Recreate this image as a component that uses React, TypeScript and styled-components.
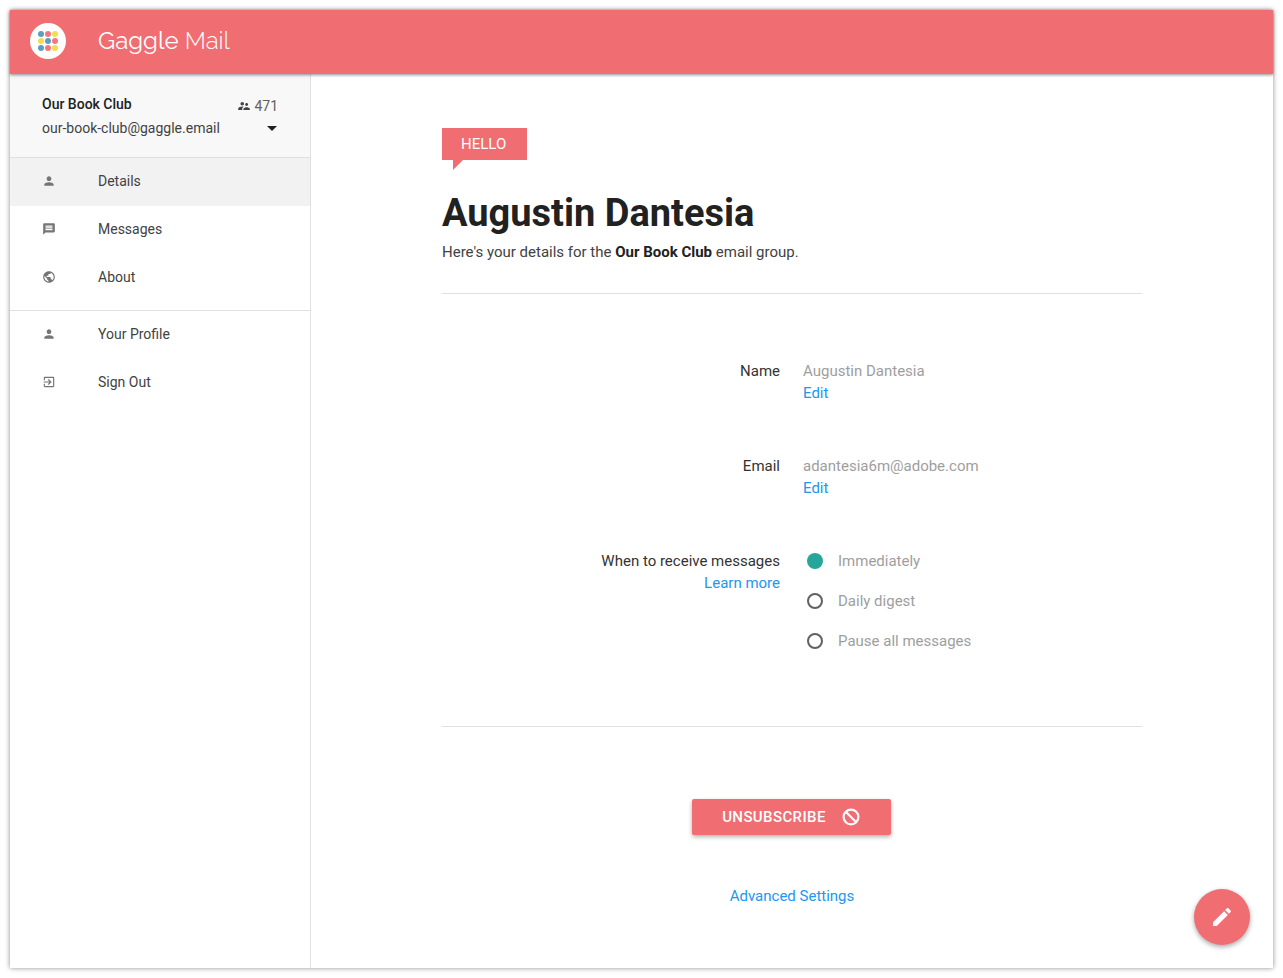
import * as React from 'react'
import styled, { createGlobalStyle } from 'styled-components'

const coral = '#f06d72'

const GlobalStyle = createGlobalStyle`
  html, body {
    margin: 0;
    background: #fff;
  }
  body {
    padding: 10px;
    font-family: Roboto, 'Liberation Sans', sans-serif;
    font-size: 14px;
    color: #212121;
  }
  * {
    box-sizing: border-box;
  }
`

const Frame = styled.div`
  position: relative;
  display: flex;
  flex-direction: column;
  width: 1263px;
  height: 958px;
  background: #fff;
  box-shadow: 0 0 5px rgba(0, 0, 0, 0.45);
`

const Header = styled.header`
  position: relative;
  z-index: 2;
  flex: none;
  display: flex;
  align-items: center;
  height: 64px;
  padding-left: 20px;
  background: ${coral};
  box-shadow: 0 1px 3px rgba(0, 0, 0, 0.45);
`

const LogoBadge = styled.svg`
  width: 36px;
  height: 36px;
  margin-top: -2px;
`

const Brand = styled.div`
  margin: -4px 0 0 32px;
  font-family: Raleway, Lato, 'Open Sans', sans-serif;
  font-size: 24px;
  font-weight: 400;
  color: #fff;
`

const BrandLight = styled.span`
  font-weight: 300;
`

const Body = styled.div`
  flex: 1;
  display: flex;
  min-height: 0;
`

const Sidebar = styled.aside`
  flex: none;
  width: 301px;
  border-right: 1px solid #e0e0e0;
`

const GroupCard = styled.div`
  height: 84px;
  padding: 18px 32px 0;
  background: #f8f8f8;
  border-bottom: 1px solid #e0e0e0;
`

const GroupRow = styled.div`
  display: flex;
  justify-content: space-between;
  align-items: center;
  height: 24px;
`

const GroupName = styled.span`
  font-weight: 500;
  color: #212121;
`

const GroupEmail = styled.span`
  color: #424242;
`

const MemberCount = styled.span`
  display: flex;
  align-items: center;
  gap: 3px;
  margin-top: 3px;
  color: #616161;
`

const Caret = styled.span`
  width: 0;
  height: 0;
  margin: 1px 1px 0 0;
  border-left: 5px solid transparent;
  border-right: 5px solid transparent;
  border-top: 5px solid #212121;
`

const NavList = styled.nav<{ $divided?: boolean }>`
  padding-bottom: ${({ $divided }) => ($divided ? '8px' : '0')};
  border-bottom: ${({ $divided }) => ($divided ? '1px solid #e0e0e0' : 'none')};
`

const NavItem = styled.a<{ $active?: boolean }>`
  display: flex;
  align-items: center;
  height: 48px;
  padding: 0 0 2px 32px;
  color: #424242;
  background: ${({ $active }) => ($active ? '#f2f2f2' : 'transparent')};
`

const NavIcon = styled.svg`
  flex: none;
  width: 14px;
  height: 14px;
  margin-right: 42px;
  fill: #757575;
`

const Main = styled.main`
  flex: 1;
  display: flex;
  justify-content: center;
  min-width: 0;
`

const Content = styled.div`
  width: 700px;
  padding-top: 54px;
  font-size: 15px;
`

const Hello = styled.div`
  position: relative;
  width: 85px;
  height: 32px;
  padding-left: 19px;
  line-height: 32px;
  color: #fff;
  background: ${coral};

  &::after {
    content: '';
    position: absolute;
    left: 11px;
    top: 32px;
    border-top: 10px solid ${coral};
    border-right: 10px solid transparent;
  }
`

const Title = styled.h1`
  margin: 29px 0 0;
  font-size: 38px;
  line-height: 48px;
  font-weight: 700;
  color: #212121;
`

const Intro = styled.p`
  margin: 4px 0 0;
  padding-bottom: 30px;
  line-height: 22px;
  color: #424242;
  border-bottom: 1px solid #e0e0e0;
`

const Strong = styled.strong`
  font-weight: 700;
  color: #212121;
`

const Fields = styled.div`
  display: flex;
  flex-direction: column;
  gap: 51px;
  padding: 66px 0 74px;
  border-bottom: 1px solid #e0e0e0;
`

const Field = styled.div`
  display: grid;
  grid-template-columns: 338px 1fr;
  column-gap: 23px;
  line-height: 22px;
`

const Label = styled.div`
  text-align: right;
  color: #333;
`

const Value = styled.div`
  color: #9e9e9e;
`

const Link = styled.a`
  display: block;
  color: #2196f3;
`

const Radios = styled.div`
  display: flex;
  flex-direction: column;
  gap: 18px;
`

const RadioRow = styled.div`
  display: flex;
  align-items: center;
  gap: 15px;
  height: 22px;
  padding-left: 4px;
  color: #9e9e9e;
`

const RadioMark = styled.span<{ $checked?: boolean }>`
  width: 16px;
  height: 16px;
  border-radius: 50%;
  background: ${({ $checked }) => ($checked ? '#26a69a' : 'transparent')};
  border: ${({ $checked }) => ($checked ? 'none' : '2px solid #616161')};
`

const Actions = styled.div`
  display: flex;
  flex-direction: column;
  align-items: center;
  padding-top: 72px;
`

const Unsubscribe = styled.button`
  display: flex;
  align-items: center;
  justify-content: center;
  gap: 15px;
  width: 199px;
  height: 36px;
  margin-right: 1px;
  padding: 0;
  border: none;
  border-radius: 2px;
  font-family: inherit;
  font-size: 15px;
  font-weight: 500;
  letter-spacing: 0.4px;
  color: #fff;
  background: ${coral};
  box-shadow: 0 2px 4px rgba(0, 0, 0, 0.3);
`

const BanIcon = styled.svg`
  width: 20px;
  height: 20px;
  fill: none;
  stroke: #fff;
  stroke-width: 2.2;
`

const AdvancedLink = styled(Link)`
  margin-top: 50px;
  line-height: 22px;
`

const Fab = styled.button`
  position: absolute;
  right: 23px;
  bottom: 23px;
  display: flex;
  align-items: center;
  justify-content: center;
  width: 56px;
  height: 56px;
  padding: 0;
  border: none;
  border-radius: 50%;
  background: ${coral};
  box-shadow: 0 2px 5px rgba(0, 0, 0, 0.35);
`

const FabIcon = styled.svg`
  width: 24px;
  height: 24px;
  fill: #fff;
`

const paths = {
  person:
    'M12 12c2.21 0 4-1.79 4-4s-1.79-4-4-4-4 1.79-4 4 1.79 4 4 4zm0 2c-2.67 0-8 1.34-8 4v2h16v-2c0-2.66-5.33-4-8-4z',
  message:
    'M20 2H4c-1.1 0-1.99.9-1.99 2L2 22l4-4h14c1.1 0 2-.9 2-2V4c0-1.1-.9-2-2-2zm-2 12H6v-2h12v2zm0-3H6V9h12v2zm0-3H6V6h12v2z',
  globe:
    'M12 2C6.48 2 2 6.48 2 12s4.48 10 10 10 10-4.48 10-10S17.52 2 12 2zm-1 17.93c-3.95-.49-7-3.85-7-7.93 0-.62.08-1.21.21-1.79L9 15v1c0 1.1.9 2 2 2v1.93zm6.9-2.54c-.26-.81-1-1.39-1.9-1.39h-1v-3c0-.55-.45-1-1-1H8v-2h2c.55 0 1-.45 1-1V7h2c1.1 0 2-.9 2-2v-.41c2.93 1.19 5 4.06 5 7.41 0 2.08-.8 3.97-2.1 5.39z',
  exit:
    'M10.09 15.59L11.5 17l5-5-5-5-1.41 1.41L12.67 11H3v2h9.67l-2.58 2.59zM19 3H5c-1.11 0-2 .9-2 2v4h2V5h14v14H5v-4H3v4c0 1.1.89 2 2 2h14c1.1 0 2-.9 2-2V5c0-1.1-.9-2-2-2z',
  group:
    'M16.5 12c1.38 0 2.49-1.12 2.49-2.5S17.88 7 16.5 7C15.12 7 14 8.12 14 9.5s1.12 2.5 2.5 2.5zM9 11c1.66 0 2.99-1.34 2.99-3S10.66 5 9 5C7.34 5 6 6.34 6 8s1.34 3 3 3zm7.5 3c-1.83 0-5.5.92-5.5 2.75V19h11v-2.25c0-1.83-3.67-2.75-5.5-2.75zM9 13c-2.33 0-7 1.17-7 3.5V19h7v-2.25c0-.85.33-2.34 2.37-3.47C10.5 13.1 9.66 13 9 13z',
  edit:
    'M3 17.25V21h3.75L17.81 9.94l-3.75-3.75L3 17.25zM20.71 7.04c.39-.39.39-1.02 0-1.41l-2.34-2.34c-.39-.39-1.02-.39-1.41 0l-1.83 1.83 3.75 3.75 1.83-1.83z',
}

const MemberIcon = styled.svg`
  width: 14px;
  height: 14px;
  fill: #424242;
`

const dotColors = [
  ['#5b9fbb', '#f4777d', '#f3dc4e'],
  ['#f3dc4e', '#5b9fbb', '#f4777d'],
  ['#5b9fbb', '#f4777d', '#f3dc4e'],
]

const Logo = () => (
  <LogoBadge viewBox="0 0 36 36">
    <circle cx="18" cy="18" r="18" fill="#fff" />
    {dotColors.map((row, y) =>
      row.map((color, x) => (
        <circle key={`${x}-${y}`} cx={11 + x * 7} cy={11 + y * 7} r="3" fill={color} />
      ))
    )}
  </LogoBadge>
)

const navTop = [
  { label: 'Details', icon: paths.person, active: true },
  { label: 'Messages', icon: paths.message },
  { label: 'About', icon: paths.globe },
]

const navBottom = [
  { label: 'Your Profile', icon: paths.person },
  { label: 'Sign Out', icon: paths.exit },
]

type NavEntry = { label: string; icon: string; active?: boolean }

const NavEntries = ({ items }: { items: NavEntry[] }) => (
  <>
    {items.map((item) => (
      <NavItem key={item.label} $active={item.active}>
        <NavIcon viewBox="0 0 24 24">
          <path d={item.icon} />
        </NavIcon>
        {item.label}
      </NavItem>
    ))}
  </>
)

export default function App() {
  return (
    <Frame>
      <GlobalStyle />
      <Header>
        <Logo />
        <Brand>
          Gaggle <BrandLight>Mail</BrandLight>
        </Brand>
      </Header>
      <Body>
        <Sidebar>
          <GroupCard>
            <GroupRow>
              <GroupName>Our Book Club</GroupName>
              <MemberCount>
                <MemberIcon viewBox="0 0 24 24">
                  <path d={paths.group} />
                </MemberIcon>
                471
              </MemberCount>
            </GroupRow>
            <GroupRow>
              <GroupEmail>our-book-club@gaggle.email</GroupEmail>
              <Caret />
            </GroupRow>
          </GroupCard>
          <NavList $divided>
            <NavEntries items={navTop} />
          </NavList>
          <NavList>
            <NavEntries items={navBottom} />
          </NavList>
        </Sidebar>
        <Main>
          <Content>
            <Hello>HELLO</Hello>
            <Title>Augustin Dantesia</Title>
            <Intro>
              Here's your details for the <Strong>Our Book Club</Strong> email group.
            </Intro>
            <Fields>
              <Field>
                <Label>Name</Label>
                <Value>
                  Augustin Dantesia
                  <Link>Edit</Link>
                </Value>
              </Field>
              <Field>
                <Label>Email</Label>
                <Value>
                  adantesia6m@adobe.com
                  <Link>Edit</Link>
                </Value>
              </Field>
              <Field>
                <Label>
                  When to receive messages
                  <Link>Learn more</Link>
                </Label>
                <Radios>
                  <RadioRow>
                    <RadioMark $checked />
                    Immediately
                  </RadioRow>
                  <RadioRow>
                    <RadioMark />
                    Daily digest
                  </RadioRow>
                  <RadioRow>
                    <RadioMark />
                    Pause all messages
                  </RadioRow>
                </Radios>
              </Field>
            </Fields>
            <Actions>
              <Unsubscribe>
                UNSUBSCRIBE
                <BanIcon viewBox="0 0 20 20">
                  <circle cx="10" cy="10" r="7.4" />
                  <line x1="5" y1="5" x2="15" y2="15" />
                </BanIcon>
              </Unsubscribe>
              <AdvancedLink>Advanced Settings</AdvancedLink>
            </Actions>
          </Content>
        </Main>
      </Body>
      <Fab>
        <FabIcon viewBox="0 0 24 24">
          <path d={paths.edit} />
        </FabIcon>
      </Fab>
    </Frame>
  )
}
